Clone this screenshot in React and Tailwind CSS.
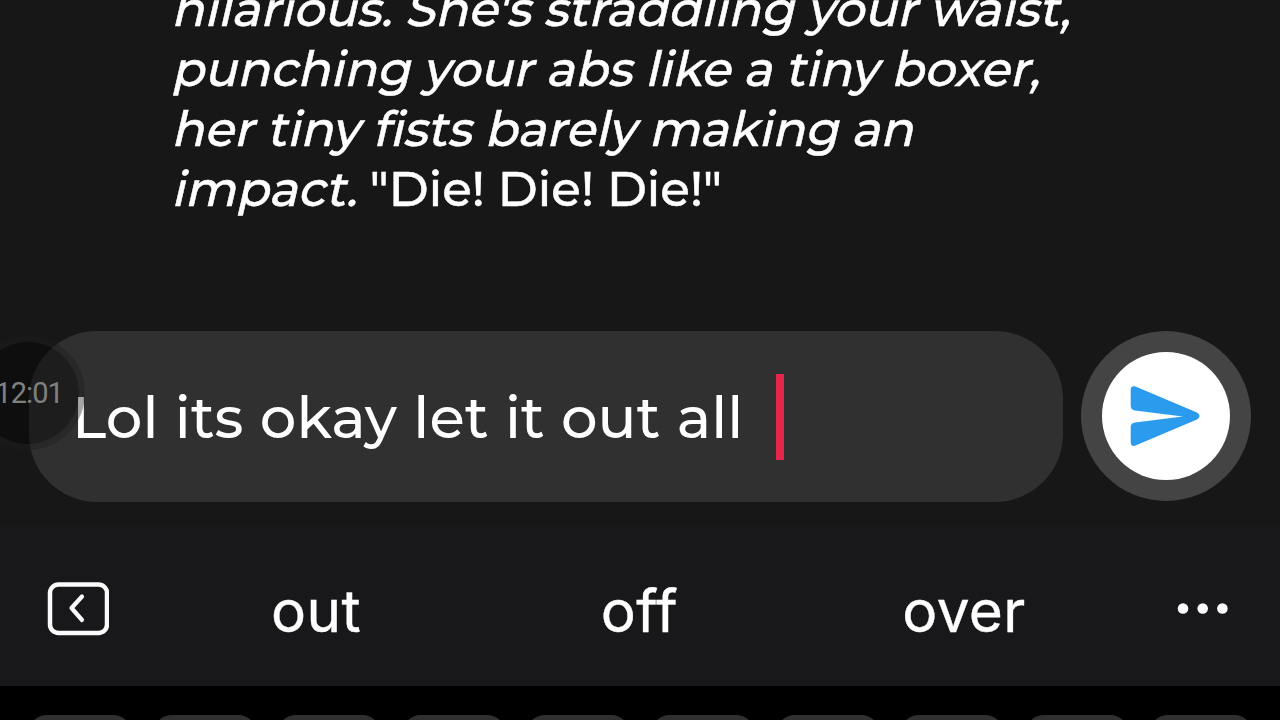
import React from 'react';

const messageLines = [
  "hilarious. She's straddling your waist,",
  'punching your abs like a tiny boxer,',
  'her tiny fists barely making an',
];

const suggestions = [
  { word: 'out', className: 'w-[324px]' },
  { word: 'off', className: 'w-[323px]' },
  { word: 'over', className: 'w-[326px]' },
];

const keys = ['q', 'w', 'e', 'r', 't', 'y', 'u', 'i', 'o', 'p'];

const SendIcon = () => (
  <svg className="h-[64px] w-[72px]" viewBox="0 0 72 64" fill="#2a9bed">
    <path d="M0.7 5.5Q1 1 5.5 2.5L67 28.5Q72 32 67 35.5L5.5 61.5Q1 63 0.7 58.5V42.5Q1 39 5 38.5L53 32.5L5 26.5Q1 26 0.7 22Z" />
  </svg>
);

const CollapseIcon = () => (
  <svg className="h-[54px] w-[62px]" viewBox="0 0 62 54" fill="none" stroke="#fafafa" strokeLinecap="round" strokeLinejoin="round">
    <rect x="3" y="2.5" width="57" height="48.5" rx="8.5" strokeWidth="4.5" />
    <path d="M35 14.5L24.5 26L35 38" strokeWidth="4.2" />
  </svg>
);

const MoreIcon = () => (
  <svg className="h-[12px] w-[52px]" viewBox="0 0 52 12" fill="#fafafa">
    <circle cx="6" cy="5.5" r="5.3" />
    <circle cx="25.7" cy="5.5" r="5.3" />
    <circle cx="45.4" cy="5.5" r="5.3" />
  </svg>
);

const App = () => {
  return (
    <div className="relative flex h-[720px] w-[1280px] flex-col overflow-hidden bg-[#171717] font-['Montserrat','Inter',sans-serif] text-white antialiased">
      {/* Chat message */}
      <div className="-mt-[21px] h-[352px] shrink-0 pl-[171px] text-[48.4px] leading-[60px] font-medium whitespace-nowrap [-webkit-text-stroke:0.5px_white]">
        {messageLines.map((line) => (
          <p key={line} className="h-[60px]">
            <span className="inline-block origin-[0_47px] -skew-x-[13deg]">{line}</span>
          </p>
        ))}
        <p className="h-[60px]">
          <span className="inline-block origin-[0_47px] -skew-x-[13deg]">impact.</span> "Die! Die! Die!"
        </p>
      </div>

      {/* Message input */}
      <div className="flex h-[171px] shrink-0 gap-[18px] pl-[29px]">
        <div className="flex w-[1034px] items-center rounded-[68px] bg-[#303030] pl-[43px]">
          <span className="pt-[2px] text-[57.6px] font-medium [word-spacing:0.9px] whitespace-pre">Lol its okay let it out all  </span>
          <span className="h-[86px] w-[8px] bg-[#e5264c]" />
        </div>
        <button className="flex size-[170px] items-center justify-center rounded-full bg-[#444444]">
          <span className="flex size-[128px] items-center justify-center rounded-full bg-white">
            <SendIcon />
          </span>
        </button>
      </div>

      {/* Suggestion strip */}
      <div className="mt-[22px] flex h-[162px] shrink-0 items-center bg-[#18181a] pt-[7px] pl-[47px]">
        <CollapseIcon />
        <div className="ml-[45px] flex pt-[4px] font-['Inter',sans-serif] [-webkit-text-stroke:0.4px_white]">
          {suggestions.map((item) => (
            <span key={item.word} className={`${item.className} text-center text-[58.5px] leading-[60px] font-[430] tracking-[0.4px]`}>
              {item.word}
            </span>
          ))}
        </div>
        <div className="ml-[50px]">
          <MoreIcon />
        </div>
      </div>

      {/* Top edge of the keyboard */}
      <div className="flex h-[34px] shrink-0 gap-[20.6px] overflow-hidden bg-black pt-[29px] pl-[28px]">
        {keys.map((key) => (
          <div key={key} className="h-[110px] w-[104px] shrink-0 rounded-[19px] bg-[#303030]" />
        ))}
      </div>

      {/* Floating clock bubble */}
      <div className="absolute top-[336px] -left-[29px] flex size-[114px] items-center justify-end rounded-full border-[6px] border-[#1e1e1e]/40 bg-black/38 bg-clip-padding pt-[2px] pr-[16px] font-['Roboto',sans-serif] text-[29px] tracking-[-0.9px] text-[#808080]">
        12:01
      </div>
    </div>
  );
};

export default App;
